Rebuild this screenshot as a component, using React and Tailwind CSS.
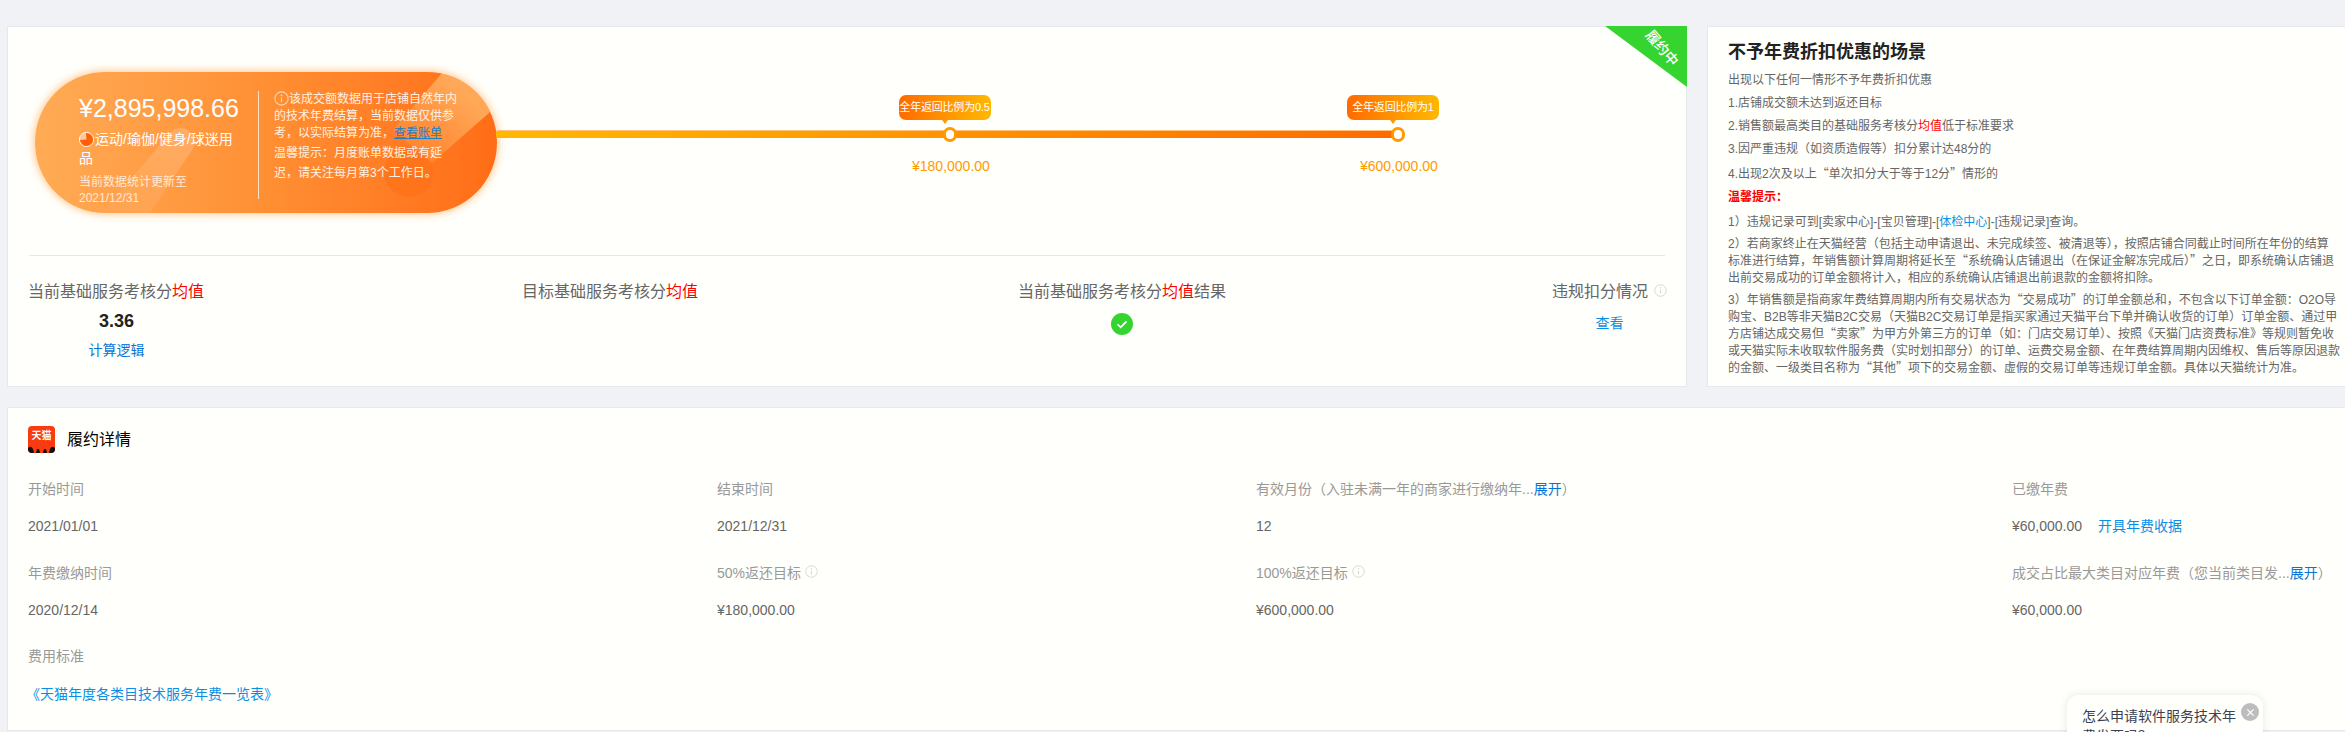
import React from "react";

const Info = ({ className = "" }) => (
  <svg viewBox="0 0 12 12" className={className} fill="none">
    <circle cx="6" cy="6" r="5.3" stroke="currentColor" strokeWidth="0.9" />
    <circle cx="6" cy="3.5" r="0.7" fill="currentColor" />
    <path d="M6 5.2v3.6" stroke="currentColor" strokeWidth="1" />
  </svg>
);

const Red = ({ children }) => <span className="text-[#ff0000]">{children}</span>;
const Link = ({ children, className = "" }) => <span className={`text-[#0a8fe6] ${className}`}>{children}</span>;
const Q = ({ children }) => <span className="font-['Noto_Sans_CJK_SC',sans-serif]">{children}</span>;

function Marker({ tip }) {
  return (
    <div className="relative w-[14px] h-[15px] bg-white rounded-full border-[3px] border-[#ff9a00] shrink-0 z-10">
      <div className="absolute -top-[35px] -left-[47px] w-[92px] h-[25px] rounded-[7px] bg-gradient-to-r from-[#ff6a00] to-[#ffb800] text-white text-[11px] leading-[25px] text-center whitespace-nowrap tracking-[-0.2px]">
        {tip}
        <div className="absolute left-1/2 -translate-x-1/2 top-[25px] w-0 h-0 border-x-[3px] border-x-transparent border-t-[4px] border-t-[#ff9a00]" />
      </div>
    </div>
  );
}

function Pill() {
  return (
    <div className="relative w-[462px] h-[141px] rounded-[70px] overflow-hidden shrink-0 bg-gradient-to-r from-[#ffab55] via-[#ff8f33] to-[#ff6d16] shadow-[0_0_7px_2px_rgba(255,170,90,0.55)] text-white">
      <svg viewBox="0 0 462 141" className="absolute inset-0 w-full h-full" fill="none">
        <defs>
          <linearGradient id="capsule" x1="0" y1="1" x2="1" y2="0">
            <stop offset="0" stopColor="#ffffff" stopOpacity="0.02" />
            <stop offset="1" stopColor="#ffffff" stopOpacity="0.2" />
          </linearGradient>
          <linearGradient id="band" x1="0" y1="1" x2="1" y2="0">
            <stop offset="0" stopColor="#ffb060" stopOpacity="0.05" />
            <stop offset="0.7" stopColor="#ffb060" stopOpacity="0.85" />
            <stop offset="1" stopColor="#ffb060" stopOpacity="1" />
          </linearGradient>
        </defs>
        <path d="M67 141 L134 62 A 14 14 0 0 1 157 78 L115 141 Z" fill="url(#capsule)" />
        <circle cx="374" cy="100" r="25" fill="#ff7218" fillOpacity="0.7" />
        <path d="M408 0 L358 58 L397 91 L454 41 L462 30 L462 0 Z" fill="url(#band)" />
      </svg>
      <div className="relative flex h-full pl-[44px] pt-[19px]">
        <div className="w-[179px] shrink-0">
          <div className="w-[162px] text-[25px] leading-[34px] whitespace-nowrap">¥2,895,998.66</div>
          <div className="w-[162px] text-[14px] leading-[19px] mt-[5px]">
            <span className="inline-block align-[-3px] w-[15px] h-[15px] mr-px">
              <svg viewBox="0 0 16 16" className="w-full h-full">
                <circle cx="8" cy="8" r="7.5" fill="#ffc79a" stroke="#fff" strokeWidth="1" />
                <path d="M8 1a7 7 0 1 1-7 7h7z" transform="rotate(-5 8 8)" fill="#ff5f0a" />
              </svg>
            </span>
            运动/瑜伽/健身/球迷用品
          </div>
          <div className="text-[12px] leading-[16px] mt-[6px] text-[#ffe9d6]">当前数据统计更新至</div>
          <div className="text-[12px] leading-[16px] text-[#ffe9d6]">2021/12/31</div>
        </div>
        <div className="w-px h-[108px] bg-[#ffe3c9] shrink-0" />
        <div className="pl-[15px] w-[200px] text-[12px] text-[#fff1e2]">
          <div className="leading-[17px]">
            <Info className="inline-block w-[15px] h-[15px] align-[-3px] text-[#ffd3ad]" />
            该成交额数据用于店铺自然年内的技术年费结算，当前数据仅供参考，以实际结算为准，
            <span className="text-[#1f7fc4] underline">查看账单</span>
          </div>
          <div className="leading-[20px] mt-px">温馨提示：月度账单数据或有延迟，请关注每月第3个工作日。</div>
        </div>
      </div>
    </div>
  );
}

function Ribbon() {
  return (
    <div className="absolute -top-px -right-px w-[82px] h-[61px] overflow-hidden">
      <svg viewBox="0 0 82 61" className="absolute inset-0 w-full h-full">
        <polygon points="0,0 82,0 82,61" fill="#36d431" />
      </svg>
      <div className="absolute left-[36px] top-[13px] rotate-[50deg] text-white text-[14px] leading-[18px] font-medium whitespace-nowrap">履约中</div>
    </div>
  );
}

function Metrics() {
  return (
    <div className="grid grid-cols-[494px_496px_534px_1fr] mx-[20px] pt-[25px] text-[16px] leading-[22px] text-[#666]">
      <div className="text-center w-[177px]">
        <div className="whitespace-nowrap text-left">当前基础服务考核分<Red>均值</Red></div>
        <div className="text-[#222] text-[18px] font-bold mt-[7px] leading-[22px]">3.36</div>
        <div className="text-[#0a74d6] text-[14px] mt-[7px] leading-[22px]">计算逻辑</div>
      </div>
      <div className="whitespace-nowrap">目标基础服务考核分<Red>均值</Red></div>
      <div className="text-center w-[208px]">
        <div className="whitespace-nowrap">当前基础服务考核分<Red>均值</Red>结果</div>
        <div className="flex justify-center mt-[10px]">
          <svg viewBox="0 0 22 22" className="w-[22px] h-[22px]">
            <circle cx="11" cy="11" r="11" fill="#36d431" />
            <path d="M6.5 11.2l3.2 3.2 5.8-6" fill="none" stroke="#fff" strokeWidth="1.6" />
          </svg>
        </div>
      </div>
      <div className="w-[115px] text-center">
        <div className="flex items-center whitespace-nowrap">违规扣分情况<Info className="w-[13px] h-[13px] ml-[6px] -mt-[4px] text-[#d6d6d6]" /></div>
        <Link className="block text-[14px] mt-[9px]">查看</Link>
      </div>
    </div>
  );
}

function Rules() {
  const head = "leading-[23px] h-[23px] whitespace-nowrap";
  return (
    <div className="flex-1 bg-[#fffffb] border border-[#e6e8ec] border-r-0 pl-[20px] pt-[13px] text-[12px] text-[#666]">
      <h2 className="text-[18px] leading-[24px] font-bold text-[#222] mb-[5px]">不予年费折扣优惠的场景</h2>
      <p className={head}>出现以下任何一情形不予年费折扣优惠</p>
      <p className={head}>1.店铺成交额未达到返还目标</p>
      <p className={head}>2.销售额最高类目的基础服务考核分<Red>均值</Red>低于标准要求</p>
      <p className={head}>3.因严重违规（如资质造假等）扣分累计达48分的</p>
      <p className={head}>4.出现2次及以上<Q>“</Q>单次扣分大于等于12分<Q>”</Q>情形的</p>
      <p className="leading-[23px] mt-[2px] font-bold text-[#ff0000]">温馨提示：</p>
      <div className="leading-[16.5px] mt-[5px] space-y-[5px] whitespace-nowrap">
        <p>1）违规记录可到[卖家中心]-[宝贝管理]-[<Link>体检中心</Link>]-[违规记录]查询。</p>
        <p>
          2）若商家终止在天猫经营（包括主动申请退出、未完成续签、被清退等），按照店铺合同截止时间所在年份的结算<br />
          标准进行结算，年销售额计算周期将延长至<Q>“</Q>系统确认店铺退出（在保证金解冻完成后）<Q>”</Q>之日，即系统确认店铺退<br />
          出前交易成功的订单金额将计入，相应的系统确认店铺退出前退款的金额将扣除。
        </p>
        <p>
          3）年销售额是指商家年费结算周期内所有交易状态为<Q>“</Q>交易成功<Q>”</Q>的订单金额总和，不包含以下订单金额：O2O导<br />
          购宝、B2B等非天猫B2C交易（天猫B2C交易订单是指买家通过天猫平台下单并确认收货的订单）订单金额、通过甲<br />
          方店铺达成交易但<Q>“</Q>卖家<Q>”</Q>为甲方外第三方的订单（如：门店交易订单）、按照《天猫门店资费标准》等规则暂免收<br />
          或天猫实际未收取软件服务费（实时划扣部分）的订单、运费交易金额、在年费结算周期内因维权、售后等原因退款<br />
          的金额、一级类目名称为<Q>“</Q>其他<Q>”</Q>项下的交易金额、虚假的交易订单等违规订单金额。具体以天猫统计为准。
        </p>
      </div>
    </div>
  );
}

function Field({ label, children }) {
  return (
    <div>
      <div className="h-[22px] leading-[22px] text-[#999] whitespace-nowrap flex items-center">{label}</div>
      <div className="h-[22px] leading-[22px] mt-[15px] text-[#666] whitespace-nowrap">{children}</div>
    </div>
  );
}

function Details() {
  return (
    <div className="relative mt-[20px] bg-[#fffffb] border border-[#e6e8ec] border-r-0 h-[324px] pl-[20px] pt-[18px] text-[14px]">
      <div className="flex items-center h-[27px]">
        <div className="relative w-[27px] h-[27px] rounded-[4px] overflow-hidden bg-[#fa3a10] text-white text-[10px] leading-[20px] text-center font-bold">
          天猫
          <svg viewBox="0 0 27 7" className="absolute left-0 bottom-0 w-full h-[7px]">
            <path d="M0 7V2q3-3 5 1l1 4zM8 7l1-4h2l1 4zM15 7l1-4h2l1 4zM21 7l1-4q2-4 5-1v5z" fill="#111" />
          </svg>
        </div>
        <h2 className="ml-[12px] text-[16px] text-black">履约详情</h2>
      </div>
      <div className="grid grid-cols-[689px_539px_756px_1fr] gap-y-[25px] mt-[25px]">
        <Field label="开始时间">2021/01/01</Field>
        <Field label="结束时间">2021/12/31</Field>
        <Field label={<>有效月份（入驻未满一年的商家进行缴纳年...<span className="text-[#0a74d6]">展开</span>）</>}>12</Field>
        <Field label="已缴年费">¥60,000.00<Link className="ml-[16px]">开具年费收据</Link></Field>
        <Field label="年费缴纳时间">2020/12/14</Field>
        <Field label={<>50%返还目标<Info className="w-[13px] h-[13px] ml-[4px] -mt-[4px] text-[#d6d6d6]" /></>}>¥180,000.00</Field>
        <Field label={<>100%返还目标<Info className="w-[13px] h-[13px] ml-[4px] -mt-[4px] text-[#d6d6d6]" /></>}>¥600,000.00</Field>
        <Field label={<>成交占比最大类目对应年费（您当前类目发...<span className="text-[#0a74d6]">展开</span>）</>}>¥60,000.00</Field>
        <div className="col-span-4 -mt-px">
          <div className="h-[22px] leading-[22px] text-[#999]">费用标准</div>
          <Link className="block h-[22px] leading-[22px] mt-[16px] ml-[-2px]">《天猫年度各类目技术服务年费一览表》</Link>
        </div>
      </div>
    </div>
  );
}

function Popup() {
  return (
    <div className="absolute left-[2067px] top-[695px] w-[196px] h-[60px] bg-[#fffffb] rounded-[12px] shadow-[0_0_10px_rgba(0,0,0,0.1)] pl-[15px] pt-[11px] pr-[26px] text-[14px] leading-[20px] text-[#3b4252]">
      怎么申请软件服务技术年费发票吗？
      <div className="absolute left-[174px] top-[8px] w-[18px] h-[18px] rounded-full bg-[#bdbdbd] flex items-center justify-center">
        <svg viewBox="0 0 10 10" className="w-[9px] h-[9px]"><path d="M1.5 1.5l7 7M8.5 1.5l-7 7" stroke="#fff" strokeWidth="1.4" /></svg>
      </div>
    </div>
  );
}

export default function App() {
  return (
    <div className="relative w-[2345px] h-[732px] overflow-hidden bg-[#f0f2f5] pl-[7px] pt-[26px] font-['Liberation_Sans','Noto_Sans_CJK_SC',sans-serif]">
      <div className="flex h-[361px] gap-[20px]">
        <div className="relative w-[1680px] bg-[#fffffb] border border-[#e6e8ec] shrink-0">
          <Ribbon />
          <div className="h-[229px] mx-[21px] border-b border-[#e5e7eb] pt-[45px] pl-[6px] flex">
            <Pill />
            <div className="relative flex items-center h-[15px] w-[909px] mt-[55px] -ml-px">
              <div className="absolute left-0 right-[8px] top-[3px] h-[8px] rounded-l-[2px] bg-gradient-to-r from-[#ffb800] to-[#ff6a00] border-t border-[#ffc27a]" />
              <div className="w-[447px]" />
              <Marker tip="全年返回比例为0.5" />
              <div className="w-[435px]" />
              <Marker tip="全年返回比例为1" />
              <div className="absolute left-[416px] top-[30px] text-[14px] leading-[18px] text-[#ff9a00] whitespace-nowrap">¥180,000.00</div>
              <div className="absolute left-[864px] top-[30px] text-[14px] leading-[18px] text-[#ff9a00] whitespace-nowrap">¥600,000.00</div>
            </div>
          </div>
          <Metrics />
        </div>
        <Rules />
      </div>
      <Details />
      <Popup />
    </div>
  );
}
